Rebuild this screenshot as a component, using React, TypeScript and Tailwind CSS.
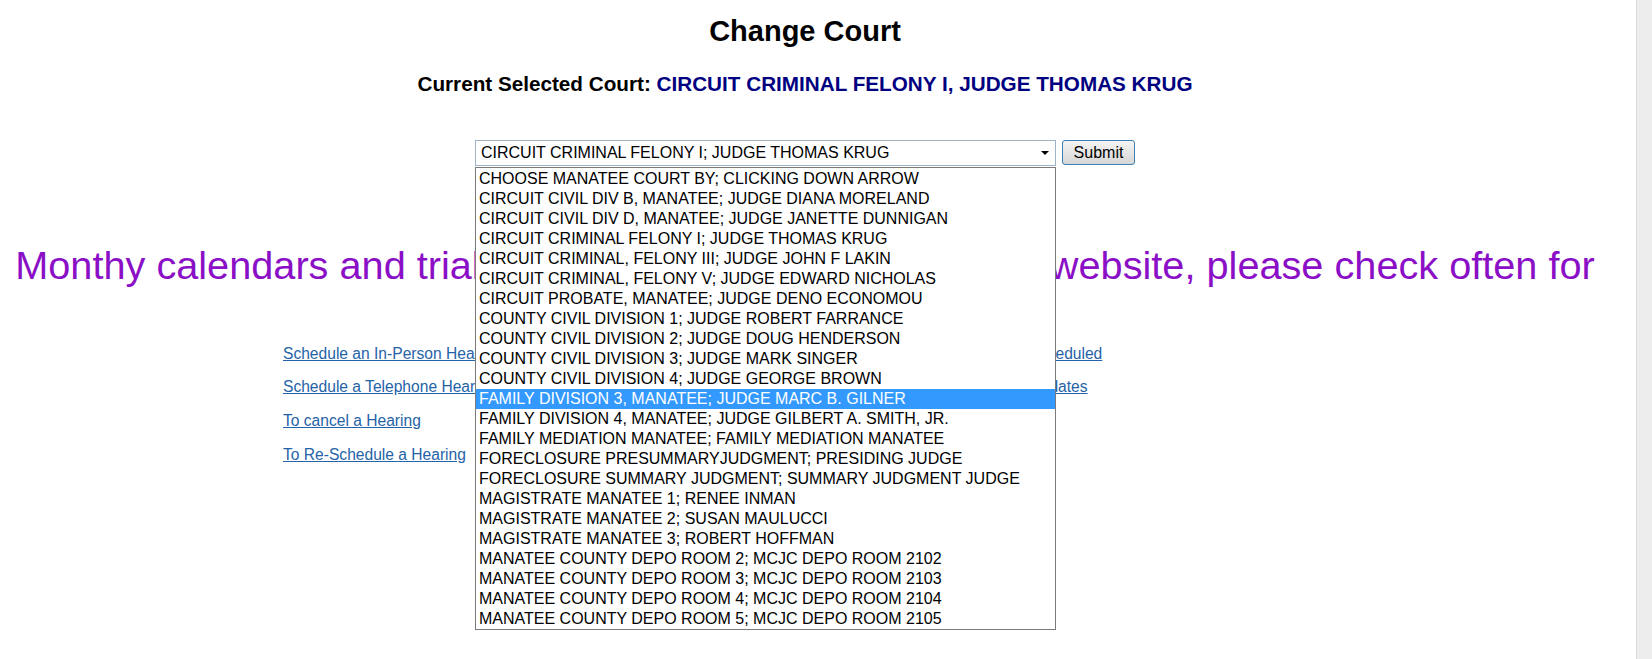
const courts = [
  "CHOOSE MANATEE COURT BY; CLICKING DOWN ARROW",
  "CIRCUIT CIVIL DIV B, MANATEE; JUDGE DIANA MORELAND",
  "CIRCUIT CIVIL DIV D, MANATEE; JUDGE JANETTE DUNNIGAN",
  "CIRCUIT CRIMINAL FELONY I; JUDGE THOMAS KRUG",
  "CIRCUIT CRIMINAL, FELONY III; JUDGE JOHN F LAKIN",
  "CIRCUIT CRIMINAL, FELONY V; JUDGE EDWARD NICHOLAS",
  "CIRCUIT PROBATE, MANATEE; JUDGE DENO ECONOMOU",
  "COUNTY CIVIL DIVISION 1; JUDGE ROBERT FARRANCE",
  "COUNTY CIVIL DIVISION 2; JUDGE DOUG HENDERSON",
  "COUNTY CIVIL DIVISION 3; JUDGE MARK SINGER",
  "COUNTY CIVIL DIVISION 4; JUDGE GEORGE BROWN",
  "FAMILY DIVISION 3, MANATEE; JUDGE MARC B. GILNER",
  "FAMILY DIVISION 4, MANATEE; JUDGE GILBERT A. SMITH, JR.",
  "FAMILY MEDIATION MANATEE; FAMILY MEDIATION MANATEE",
  "FORECLOSURE PRESUMMARYJUDGMENT; PRESIDING JUDGE",
  "FORECLOSURE SUMMARY JUDGMENT; SUMMARY JUDGMENT JUDGE",
  "MAGISTRATE MANATEE 1; RENEE INMAN",
  "MAGISTRATE MANATEE 2; SUSAN MAULUCCI",
  "MAGISTRATE MANATEE 3; ROBERT HOFFMAN",
  "MANATEE COUNTY DEPO ROOM 2; MCJC DEPO ROOM 2102",
  "MANATEE COUNTY DEPO ROOM 3; MCJC DEPO ROOM 2103",
  "MANATEE COUNTY DEPO ROOM 4; MCJC DEPO ROOM 2104",
  "MANATEE COUNTY DEPO ROOM 5; MCJC DEPO ROOM 2105",
];

const leftLinks = [
  "Schedule an In-Person Hearing",
  "Schedule a Telephone Hearing",
  "To cancel a Hearing",
  "To Re-Schedule a Hearing",
];

const rightLinks = ["View Hearings Scheduled", "View Calendar Updates"];

function HearingLink({ label }: { label: string }) {
  return (
    <div className="flex h-[33.67px] items-center">
      <a href="#" className="text-[15.6px] leading-[18px] text-[#2563a8] underline">
        {label}
      </a>
    </div>
  );
}

export default function App() {
  const highlighted = 11;

  return (
    <div className="flex min-h-[659px] bg-white font-['Liberation_Sans',Arial,sans-serif] text-black">
      <main className="w-[1610px] shrink-0 pt-[14px] text-center">
        <h1 className="text-[29px] leading-[34px] font-bold">Change Court</h1>
        <p className="mt-[24px] text-[20.7px] leading-[24px] font-bold">
          Current Selected Court:{" "}
          <span className="text-[#000080]">CIRCUIT CRIMINAL FELONY I, JUDGE THOMAS KRUG</span>
        </p>

        <div className="mt-[44px] flex items-start justify-center gap-[6px]">
          <div className="relative">
            <div className="flex h-[26px] w-[581px] items-center justify-between border border-[#9fb3c8] bg-white pl-[5px] pr-[6px] text-[16px]">
              <span>CIRCUIT CRIMINAL FELONY I; JUDGE THOMAS KRUG</span>
              <span className="h-0 w-0 border-x-[4px] border-t-[4px] border-x-transparent border-t-black" />
            </div>
            {/* open dropdown list */}
            <ul className="absolute left-0 top-[27px] z-10 w-[581px] border border-[#7a7a7a] bg-white pt-[1px] text-left text-[16px]">
              {courts.map((court, i) => (
                <li
                  key={court}
                  className={`h-[20px] pl-[3px] leading-[20px] whitespace-nowrap ${
                    i === highlighted ? "bg-[#3399ff] text-white" : "text-black"
                  }`}
                >
                  {court}
                </li>
              ))}
            </ul>
          </div>
          <button className="h-[25px] w-[73px] rounded-[3px] border border-[#3c7fb1] bg-gradient-to-b from-[#f4f4f4] to-[#d6d6d6] text-[16px] leading-[22px]">
            Submit
          </button>
        </div>

        <p className="mt-[76px] text-[39.7px] leading-[46px] text-[#8a0fc6]">
          Monthy calendars and trial dockets are now posted on this website, please check often for
          <br />
          updates.
        </p>

        <div className="mt-[3px] ml-[283px] grid grid-cols-[641px_auto] text-left">
          <div>
            {leftLinks.map((l) => (
              <HearingLink key={l} label={l} />
            ))}
          </div>
          <div>
            {rightLinks.map((l) => (
              <HearingLink key={l} label={l} />
            ))}
          </div>
        </div>
      </main>
      <div className="flex-1" />
      <div className="w-[16px] border-l border-[#d9d9d9] bg-[#ededed]" />
    </div>
  );
}
